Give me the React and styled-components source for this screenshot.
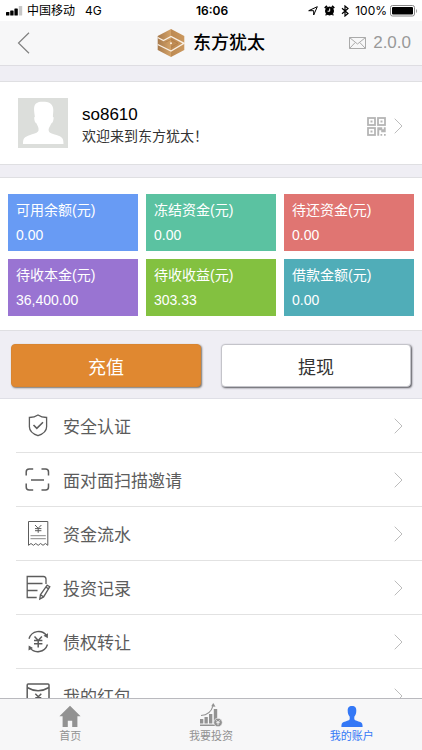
import React from 'react';
import styled, { createGlobalStyle } from 'styled-components';

const GlobalStyle = createGlobalStyle`
	* {
		box-sizing: border-box;
	}

	body {
		margin: 0;
		background: #efeef4;
		color: #000;
		font-family: "Liberation Sans", "Noto Sans CJK SC", sans-serif;
	}

	a {
		color: inherit;
		text-decoration: none;
	}
`;

const Shell = styled.div`
	display: flex;
	flex-direction: column;
	height: 100vh;
`;

const StatusBar = styled.div`
	display: grid;
	grid-template-columns: 1fr auto 1fr;
	align-items: center;
	flex: none;
	height: 21px;
	padding: 0 4px 0 6px;
	background: #fff;
	font-family: Inter, "Noto Sans CJK SC", sans-serif;
	font-size: 12px;
	line-height: 20px;
`;

const StatusGroup = styled.div`
	display: flex;
	align-items: center;
	justify-content: ${(props) => (props.$end ? 'flex-end' : 'flex-start')};
	gap: ${(props) => (props.$end ? 6 : 4)}px;
`;

const Network = styled.span`
	margin-left: 6px;
`;

const Battery = styled.span`
	display: flex;
	align-items: center;
	gap: 3px;
`;

const Clock = styled.time`
	font-weight: 600;
`;

const Header = styled.header`
	display: grid;
	grid-template-columns: 1fr auto 1fr;
	align-items: center;
	flex: none;
	height: 45px;
	padding: 0 11px;
	background: #f7f7f8;
	border-bottom: 1px solid #dedde2;
`;

const BackButton = styled.button`
	display: flex;
	justify-self: start;
	padding: 0 6px;
	border: 0;
	background: none;
	cursor: pointer;
`;

const Brand = styled.h1`
	display: flex;
	align-items: center;
	gap: 8px;
	margin: 0;
	font-size: 18px;
	font-weight: 500;
	line-height: 26px;
`;

const Version = styled.a`
	display: flex;
	align-items: center;
	justify-self: end;
	gap: 7px;
	color: #999;
	font-size: 17px;
`;

const Content = styled.main`
	flex: 1;
	min-height: 0;
	overflow-y: auto;
	scrollbar-width: none;
`;

const Panel = styled.section`
	background: #fff;
	border-top: 1px solid #dfdfe2;
	border-bottom: 1px solid #dfdfe2;
`;

const Profile = styled(Panel)`
	margin: 15px 0 12px;
`;

const ProfileLink = styled.a`
	display: flex;
	align-items: center;
	height: 82px;
	padding: 0 19px 0 18px;
`;

const ProfileText = styled.div`
	flex: 1;
	margin-left: 14px;
	padding-top: 4px;
`;

const UserName = styled.div`
	font-size: 17px;
	line-height: 22px;
`;

const Welcome = styled.div`
	color: #333;
	font-size: 14px;
	line-height: 20px;
`;

const ProfileIcons = styled.div`
	display: flex;
	align-items: center;
	gap: 8px;
	padding-top: 6px;
`;

const Balances = styled(Panel)`
	display: grid;
	grid-template-columns: repeat(3, 1fr);
	gap: 8px;
	padding: 16px 8px 14px;
	border-bottom: 0;
`;

const BalanceCard = styled.div`
	height: 57px;
	padding: 4px 8px;
	background: ${(props) => props.$color};
	color: #fff;
	font-size: 14px;
	line-height: 25px;
`;

const Actions = styled.section`
	display: flex;
	gap: 20px;
	padding: 13px 11px 11px;
	border-top: 1px solid #dfdfe2;
`;

const ActionButton = styled.button`
	flex: 1;
	height: 43px;
	padding: 0;
	border: 1px solid ${(props) => (props.$primary ? '#d98530' : '#c4c4ca')};
	border-radius: 4px;
	background: ${(props) => (props.$primary ? '#e08830' : '#fff')};
	box-shadow: 1px 1px 2px ${(props) => (props.$primary ? '#77716c' : '#55555c')};
	color: ${(props) => (props.$primary ? '#fff' : '#333')};
	font-family: inherit;
	font-size: 18px;
	cursor: pointer;
`;

const Menu = styled.nav`
	padding-left: 16px;
	background: #fff;
	border-top: 1px solid #dfdfe6;
`;

const MenuRow = styled.a`
	display: flex;
	align-items: center;
	height: 54px;
	padding: 0 19px 0 8px;
	border-bottom: 1px solid #e2e2e2;
	color: #5c5c5c;
	font-size: 17px;
`;

const MenuLabel = styled.span`
	flex: 1;
	margin-left: 11px;
`;

const TabBar = styled.nav`
	display: flex;
	flex: none;
	height: 52px;
	background: #f7f7f8;
	border-top: 1px solid #b9b9be;
`;

const Tab = styled.a`
	display: flex;
	flex: 1;
	flex-direction: column;
	align-items: center;
	gap: 2px;
	padding-top: 4px;
	color: ${(props) => (props.$active ? '#3478f6' : '#929292')};
	font-size: 11px;
	line-height: 14px;
`;

const Chevron = () => (
	<svg width="9" height="16" viewBox="0 0 9 16" fill="none" stroke="#bcbcbc">
		<path d="M.7.7 8 8 .7 15.3" />
	</svg>
);

const SignalIcon = () => (
	<svg width="17" height="10" viewBox="0 0 17 10">
		<rect x="0" y="6" width="3.4" height="3.500" rx=".6" />
		<rect x="4.200" y="4.500" width="3.400" height="5" rx=".6" />
		<rect x="8.400" y="2.500" width="3.400" height="7" rx=".6" />
		<rect x="12.800" y="0" width="3.400" height="9.500" rx=".6" fill="#c6c6c6" />
	</svg>
);

const LocationIcon = () => (
	<svg width="10" height="10" viewBox="0 0 10 10" fill="none" stroke="#000" strokeLinejoin="round">
		<path d="M9.300.7 5.700 9V4.700H.7z" />
	</svg>
);

const AlarmIcon = () => (
	<svg width="11" height="11" viewBox="0 0 11 11" fill="none" stroke="#000">
		<circle cx="5.5" cy="6" r="4" fill="#000" />
		<path d="M.8 3.2 3 1M10.2 3.2 8 1" strokeWidth="1.8" />
		<path d="m2.6 9.2-1 1.2M8.4 9.2l1 1.2" strokeWidth="1.2" />
		<path d="M5.7 3.5v2.7H3.6" stroke="#fff" />
	</svg>
);

const BluetoothIcon = () => (
	<svg width="8" height="12" viewBox="0 0 8 12" fill="none" stroke="#000" strokeWidth="1.200">
		<path d="m1 3.3 6 5.2-3 2.5V1l3 2.5-6 5.2" />
	</svg>
);

const BatteryIcon = () => (
	<svg width="28" height="12" viewBox="0 0 28 12">
		<rect x=".5" y=".5" width="24" height="10.5" rx="2" fill="none" stroke="#888" />
		<rect x="2" y="2" width="21" height="7.5" rx="1" />
		<path d="M26 4v4c1.4-.8 1.4-3.2 0-4z" fill="#999" />
	</svg>
);

const LogoIcon = () => (
	<svg width="28" height="30" viewBox="0 0 28 30">
		<defs>
			<linearGradient id="gold" x1="0" y1="0" x2="1" y2="0">
				<stop offset="0" stopColor="#a87a4c" />
				<stop offset=".49" stopColor="#d3a268" />
				<stop offset=".51" stopColor="#bd8a52" />
				<stop offset="1" stopColor="#cb985e" />
			</linearGradient>
		</defs>
		<path d="M14 1 27.3 8v14L14 29 .7 22V8z" fill="url(#gold)" />
		<path d="M.7 9.500 6.500 12.500 14 8.500l13 6.800L14 23 .7 16.500" fill="none" stroke="#f9f0e5" strokeWidth="1.300" />
		<path d="m8.500 14.200 5.500-2.700 7 3.800-7 4" fill="none" stroke="#ad7944" strokeWidth=".7" />
		<circle cx="14" cy="15.2" r="1" fill="#fff4e5" />
	</svg>
);

const AvatarIcon = () => (
	<svg width="50" height="50" viewBox="0 0 50 50">
		<rect width="50" height="50" fill="#dcdedb" />
		<path
			fill="#fff"
			d="M5 46c0-5 1-6.500 5-8.200 6-2.300 10-2.800 10.500-5.300.4-2.500-.6-4.200-2-7-1-1-1.600-.8-2-3.200-.3-1.700-.5-3.500.4-3.500C16 12.500 15.200 8 18 5.500 20.500 3.400 24 3.600 27 3.800c5.500.2 8.300 3.600 8.300 8.200 0 2.500-.4 4.500-.4 6.800 1.200.2.700 2 .4 3.500-.4 2.200-1.200 2.600-2 3.200-1.200 3.200-3.200 4.500-2.500 7.500.5 2.500 4.200 2.800 9.700 4.800 4 1.600 5 3.200 5 8.200z"
		/>
	</svg>
);

const QrIcon = () => (
	<svg width="19" height="19" viewBox="0 0 19 19" fill="#b5b5b5">
		<g fill="none" stroke="#b5b5b5" strokeWidth="1.8">
			<rect x="1" y="1" width="7" height="7" />
			<rect x="11" y="1" width="7" height="7" />
			<rect x="1" y="11" width="7" height="7" />
		</g>
		<path d="M3.500 3.500h2v2h-2zM13.500 3.500h2v2h-2zM3.500 13.500h2v2h-2z" />
		<path d="M10.300 10.300h5v2h1.500v-2h1.900v5h-4.500v-2h-2v5.400h-1.900zM13.500 17h1.700v1.700h-1.700zM17 17h1.700v1.700H17z" />
	</svg>
);

const lineIcon = {
	width: 28,
	height: 28,
	viewBox: '0 0 28 28',
	fill: 'none',
	stroke: '#5c5c5c',
	strokeWidth: 1.3
};

const ShieldIcon = () => (
	<svg {...lineIcon}>
		<path d="M14 3c2.500 1.700 5.300 2.400 8.600 2.500v9.300c0 4.400-3.600 7.200-8.600 8.900-5-1.700-8.600-4.500-8.600-8.900V5.500C8.700 5.400 11.500 4.700 14 3z" />
		<path d="m9.500 13 3.300 3.300 6.200-6.100" strokeWidth="1.600" />
	</svg>
);

const ScanIcon = () => (
	<svg {...lineIcon} strokeWidth="1.500">
		<path d="M2.200 9.500V6q0-3 3-3h4M17.500 3h4q3 0 3 3v3.500M24.500 17.500V21q0 3-3 3h-4M9.200 24h-4q-3 0-3-3v-3.500M7 14h13" />
	</svg>
);

const BillIcon = () => (
	<svg {...lineIcon} strokeWidth="1">
		<path d="M4.500 25.300V1.500h19.300v23.800l-2.400-1.800-2.400 1.800-2.400-1.800-2.400 1.800-2.400-1.800-2.400 1.800-2.400-1.800z" />
		<path d="m11 5 3.200 3.300L17.400 5M14.200 8.300v4.500M11 8.600h6.400M11 10.700h6.400" />
		<path d="M6.500 15.700h15.300M6.500 18.700h15.300" stroke="#888" />
	</svg>
);

const RecordIcon = () => (
	<svg {...lineIcon}>
		<path d="M22 10V5q0-2.500-2.500-2.500H3.200v21h9.500M3.200 9.500h15.300M3.200 16.500h10.300" />
		<path d="m23.200 11.200 2.600 1.500-6.200 10.200-3.800 2.200.6-4.300zM22 13.300l2.700 1.600M16.400 20.800l3.200 2.100" />
	</svg>
);

const TransferIcon = () => (
	<svg {...lineIcon}>
		<path d="M5 10.800C7.700 2.300 18 1.300 22.700 7.700M23.500 16.500c-2.700 8.200-13 9.500-17.800 3.200" strokeWidth="1.400" />
		<path d="m24 5.200-.2 5-4.300-2.500zM4.500 22.500l.2-5L9 20z" fill="#5c5c5c" stroke="none" />
		<path d="m10.500 8.500 3.700 4 3.700-4M14.200 12.500v7M10 12.500h8.400M10 15.700h8.400" strokeWidth="1.500" />
	</svg>
);

const EnvelopeIcon = () => (
	<svg {...lineIcon} strokeWidth="1.500">
		<rect x="3.200" y="2" width="21.800" height="23" rx="1" />
		<path d="M3.200 5.500q10.900 6.500 21.800 0M11.300 11.800l3 3 3-3M14.300 14.800v5M11.300 15.800h6" />
	</svg>
);

const HomeIcon = () => (
	<svg width="24" height="24" viewBox="0 0 24 24" fill="currentColor">
		<path d="m12 2.700 10.600 10.600h-3.200v10.900h-5.200v-6.500H9.800v6.500H4.600V13.300H1.400z" />
	</svg>
);

const InvestIcon = () => (
	<svg width="24" height="24" viewBox="0 0 24 24" fill="currentColor">
		<path d="M1 16h3.300v4.500H1zM5.500 14h3.300v6.500H5.500zM10 11h3.300v9.500H10zM14.800 6h3.400v9.500l-3.400 5z" />
		<path d="M1 21.500h15V23H1z" />
		<path d="M2 12.500C9 12 12.500 8 14 2.800" fill="none" stroke="currentColor" strokeWidth="1.100" />
		<path d="m14.300 0 2.200 3.700-4.300-.4z" />
		<circle cx="19" cy="19.500" r="4.300" stroke="#f7f7f8" strokeWidth=".7" />
		<path d="m17.200 17.300 1.800 2 1.800-2M19 19.300v2.800M17.200 19.700h3.600" fill="none" stroke="#f7f7f8" strokeWidth=".9" />
	</svg>
);

const UserIcon = () => (
	<svg width="24" height="24" viewBox="0 0 24 24" fill="currentColor">
		<path d="M12 3c3.200 0 4.400 2 4.300 4.700 0 2.800-.8 4.600-2 6v2.500c.7 1.600 3.700 1.800 6 2.800 2 .9 2.300 2.300 2.300 5H1.400c0-2.700.3-4.100 2.300-5 2.300-1 5.300-1.200 6-2.800v-2.500c-1.200-1.400-2-3.200-2-6C7.600 5 8.800 3 12 3z" />
	</svg>
);

const balances = [
	{ label: '可用余额(元)', value: '0.00', color: '#689bf4' },
	{ label: '冻结资金(元)', value: '0.00', color: '#5bc2a1' },
	{ label: '待还资金(元)', value: '0.00', color: '#e07572' },
	{ label: '待收本金(元)', value: '36,400.00', color: '#9974d2' },
	{ label: '待收收益(元)', value: '303.33', color: '#83c140' },
	{ label: '借款金额(元)', value: '0.00', color: '#50adb8' }
];

const menu = [
	{ label: '安全认证', Icon: ShieldIcon },
	{ label: '面对面扫描邀请', Icon: ScanIcon },
	{ label: '资金流水', Icon: BillIcon },
	{ label: '投资记录', Icon: RecordIcon },
	{ label: '债权转让', Icon: TransferIcon },
	{ label: '我的红包', Icon: EnvelopeIcon }
];

const tabs = [
	{ label: '首页', Icon: HomeIcon },
	{ label: '我要投资', Icon: InvestIcon },
	{ label: '我的账户', Icon: UserIcon, active: true }
];

export default () => (
	<Shell>
		<GlobalStyle />
		<StatusBar>
			<StatusGroup>
				<SignalIcon />
				<span>中国移动</span>
				<Network>4G</Network>
			</StatusGroup>
			<Clock>16:06</Clock>
			<StatusGroup $end>
				<LocationIcon />
				<AlarmIcon />
				<BluetoothIcon />
				<Battery>
					100%
					<BatteryIcon />
				</Battery>
			</StatusGroup>
		</StatusBar>

		<Header>
			<BackButton aria-label="返回">
				<svg width="13" height="22" viewBox="0 0 13 22" fill="none" stroke="#808080" strokeWidth="1.200">
					<path d="M12 .7 1.500 11 12 21.300" />
				</svg>
			</BackButton>
			<Brand>
				<LogoIcon />
				东方犹太
			</Brand>
			<Version href="#messages">
				<svg width="17" height="12" viewBox="0 0 17 12" fill="none" stroke="#aaa">
					<path d="M.5.5h16v11H.5zM.5.5l8 6.500 8-6.500M.5 11.500l5.700-6M16.500 11.500l-5.700-6" />
				</svg>
				2.0.0
			</Version>
		</Header>

		<Content>
			<Profile>
				<ProfileLink href="#profile">
					<AvatarIcon />
					<ProfileText>
						<UserName>so8610</UserName>
						<Welcome>欢迎来到东方犹太！</Welcome>
					</ProfileText>
					<ProfileIcons>
						<QrIcon />
						<Chevron />
					</ProfileIcons>
				</ProfileLink>
			</Profile>

			<Balances>
				{balances.map(({ label, value, color }) => (
					<BalanceCard key={label} $color={color}>
						<div>{label}</div>
						<div>{value}</div>
					</BalanceCard>
				))}
			</Balances>

			<Actions>
				<ActionButton $primary>充值</ActionButton>
				<ActionButton>提现</ActionButton>
			</Actions>

			<Menu>
				{menu.map(({ label, Icon }) => (
					<MenuRow key={label} href={`#${label}`}>
						<Icon />
						<MenuLabel>{label}</MenuLabel>
						<Chevron />
					</MenuRow>
				))}
			</Menu>
		</Content>

		<TabBar>
			{tabs.map(({ label, Icon, active }) => (
				<Tab key={label} href={`#${label}`} $active={active}>
					<Icon />
					{label}
				</Tab>
			))}
		</TabBar>
	</Shell>
);
